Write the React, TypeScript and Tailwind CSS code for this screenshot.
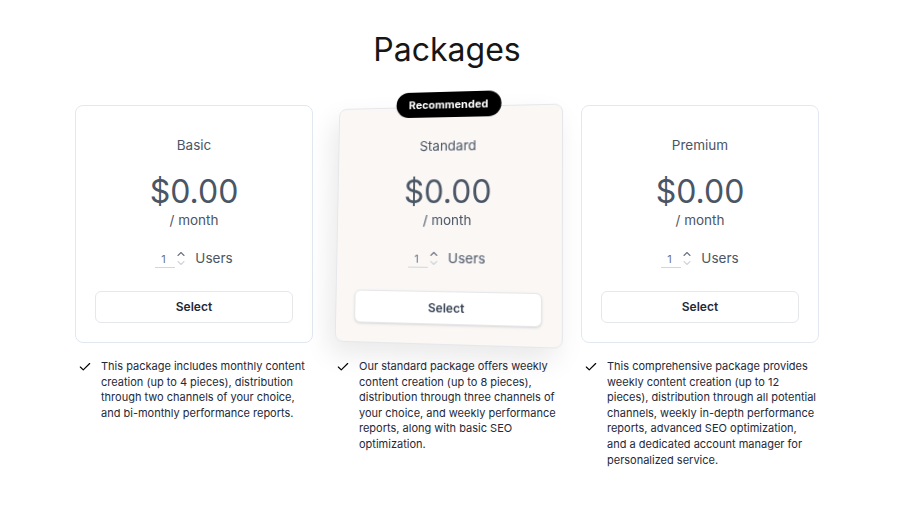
import { Check } from "lucide-react";

interface Pkg {
  name: string;
  blurb: string;
  featured?: boolean;
}

const packages: Pkg[] = [
  {
    name: "Basic",
    blurb:
      "This package includes monthly content creation (up to 4 pieces), distribution through two channels of your choice, and bi-monthly performance reports.",
  },
  {
    name: "Standard",
    featured: true,
    blurb:
      "Our standard package offers weekly content creation (up to 8 pieces), distribution through three channels of your choice, and weekly performance reports, along with basic SEO optimization.",
  },
  {
    name: "Premium",
    blurb:
      "This comprehensive package provides weekly content creation (up to 12 pieces), distribution through all potential channels, weekly in-depth performance reports, advanced SEO optimization, and a dedicated account manager for personalized service.",
  },
];

function UsersInput() {
  return (
    <div className="flex h-5 items-center justify-center">
      <span className="mt-[4px] w-[20px] border-b border-gray-300 pb-[1px] pl-[6px] text-[11px] leading-[14px] text-gray-500">
        1
      </span>
      <svg width="10" height="18" viewBox="0 0 10 18" className="ml-[1px]" fill="none">
        <path d="M2 6.5 5 3.5l3 3" stroke="#6b7280" strokeWidth="1.1" strokeLinecap="round" strokeLinejoin="round" />
        <path d="M2 12.5l3 3 3-3" stroke="#d1d5db" strokeWidth="1.1" strokeLinecap="round" strokeLinejoin="round" />
      </svg>
      <span className="ml-[9px] text-[13.5px] text-gray-600">Users</span>
    </div>
  );
}

function Card({ pkg }: { pkg: Pkg }) {
  return (
    <div
      className={
        pkg.featured
          ? "relative mx-[5px] flex h-[239px] w-[228px] flex-col items-center rounded-lg border border-gray-200 bg-[#faf7f5] px-[19px] pt-[29px] pb-[19px] shadow-[-6px_12px_28px_rgba(0,0,0,0.09)] [transform:perspective(600px)_rotateX(3deg)_rotateY(-8deg)_rotate(0.6deg)]"
          : "relative flex h-[238px] w-[238px] flex-col items-center rounded-lg border border-slate-200 bg-white px-[19px] pt-[29px] pb-[19px]"
      }
    >
      {pkg.featured && (
        <div className="absolute -top-[16px] left-1/2 -translate-x-1/2 rounded-full bg-black px-[13px] py-[6px] text-[11px] leading-[14px] font-bold text-white">
          Recommended
        </div>
      )}
      <div className="text-[13.5px] leading-5 text-gray-600">{pkg.name}</div>
      <div className="mt-[19px] text-[32px] leading-[36px] text-gray-600">$0.00</div>
      <div className="text-[13.5px] leading-5 text-gray-600">/ month</div>
      <div className="mt-[18px]">
        <UsersInput />
      </div>
      <button
        type="button"
        className={
          pkg.featured
            ? "mt-[23px] h-[34px] w-full rounded-md border border-gray-200 bg-white text-[12px] font-semibold text-gray-700 shadow-sm"
            : "mt-[23px] h-[34px] w-full rounded-md border border-gray-200 bg-white text-[12px] font-semibold text-gray-800"
        }
      >
        Select
      </button>
    </div>
  );
}

export default function App() {
  return (
    <div className="min-h-[510px] w-[894px] bg-white font-['Inter',sans-serif]">
      <div className="flex flex-col items-center pt-[30px]">
        <h1 className="text-[32px] leading-10 font-normal text-[#161616]">Packages</h1>
        <div className="mt-[35px] flex gap-[15px]">
          {packages.map((p) => (
            <div key={p.name} className="flex w-[238px] flex-col">
              <Card pkg={p} />
              <div className={p.featured ? "mt-[15px] flex pl-[8px]" : "mt-[16px] flex pl-[3px]"}>
                <Check size={14} strokeWidth={2} className="mt-[1px] shrink-0 text-black" />
                <p className="ml-[9px] text-[11px] leading-[15.6px] text-gray-800">{p.blurb}</p>
              </div>
            </div>
          ))}
        </div>
      </div>
    </div>
  );
}
